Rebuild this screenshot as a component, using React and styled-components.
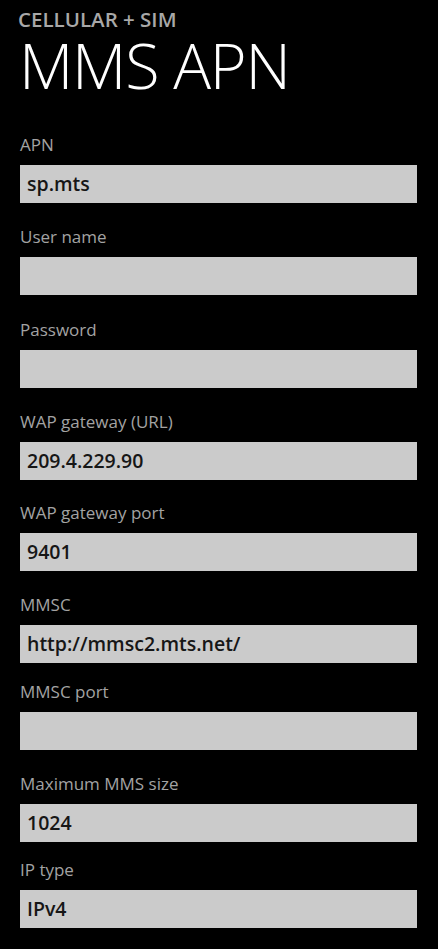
import React from "react";
import styled, { createGlobalStyle } from "styled-components";

const GlobalStyle = createGlobalStyle`
  html, body {
    margin: 0;
    padding: 0;
    background: #000;
  }
  body {
    font-family: "Open Sans", "Noto Sans", sans-serif;
  }
`;

const fields = [
  { label: "APN", value: "sp.mts", gap: 37 },
  { label: "User name", value: "", gap: 23 },
  { label: "Password", value: "", gap: 24 },
  { label: "WAP gateway (URL)", value: "209.4.229.90", gap: 23 },
  { label: "WAP gateway port", value: "9401", gap: 22 },
  { label: "MMSC", value: "http://mmsc2.mts.net/", gap: 23 },
  { label: "MMSC port", value: "", gap: 18 },
  { label: "Maximum MMS size", value: "1024", gap: 23 },
  { label: "IP type", value: "IPv4", gap: 17 },
];

const App = () => {
  return (
    <Page>
      <GlobalStyle />
      <Header>
        <AppTitle>CELLULAR + SIM</AppTitle>
        <PageTitle>MMS APN</PageTitle>
      </Header>
      <Form>
        {fields.map((f) => (
          <Field key={f.label} $gap={f.gap}>
            <Label>{f.label}</Label>
            <Box>{f.value}</Box>
          </Field>
        ))}
      </Form>
    </Page>
  );
};

export default App;

const Page = styled.div`
  width: 438px;
  min-height: 949px;
  background: #000;
  padding: 5px 21px 0 20px;
  box-sizing: border-box;
`;

const Header = styled.header`
  display: flex;
  flex-direction: column;
`;

const AppTitle = styled.div`
  font-size: 20.5px;
  line-height: 28px;
  font-weight: 600;
  color: #a8a8a8;
  margin-left: -2px;
`;

const PageTitle = styled.h1`
  margin: 0;
  font-size: 63px;
  line-height: 64px;
  font-weight: 300;
  letter-spacing: -1.3px;
  color: #fff;
  margin-left: -1px;
`;

const Form = styled.div`
  display: flex;
  flex-direction: column;
`;

const Field = styled.div`
  display: flex;
  flex-direction: column;
  margin-top: ${(p) => p.$gap}px;
`;

const Label = styled.label`
  font-size: 17px;
  line-height: 22px;
  color: #a3a3a3;
  margin-bottom: 9px;
`;

const Box = styled.div`
  height: 38px;
  background: #cbcbcb;
  padding: 0 7px;
  font-size: 19.5px;
  line-height: 38px;
  font-weight: 600;
  color: #161616;
  white-space: nowrap;
  overflow: hidden;
`;
